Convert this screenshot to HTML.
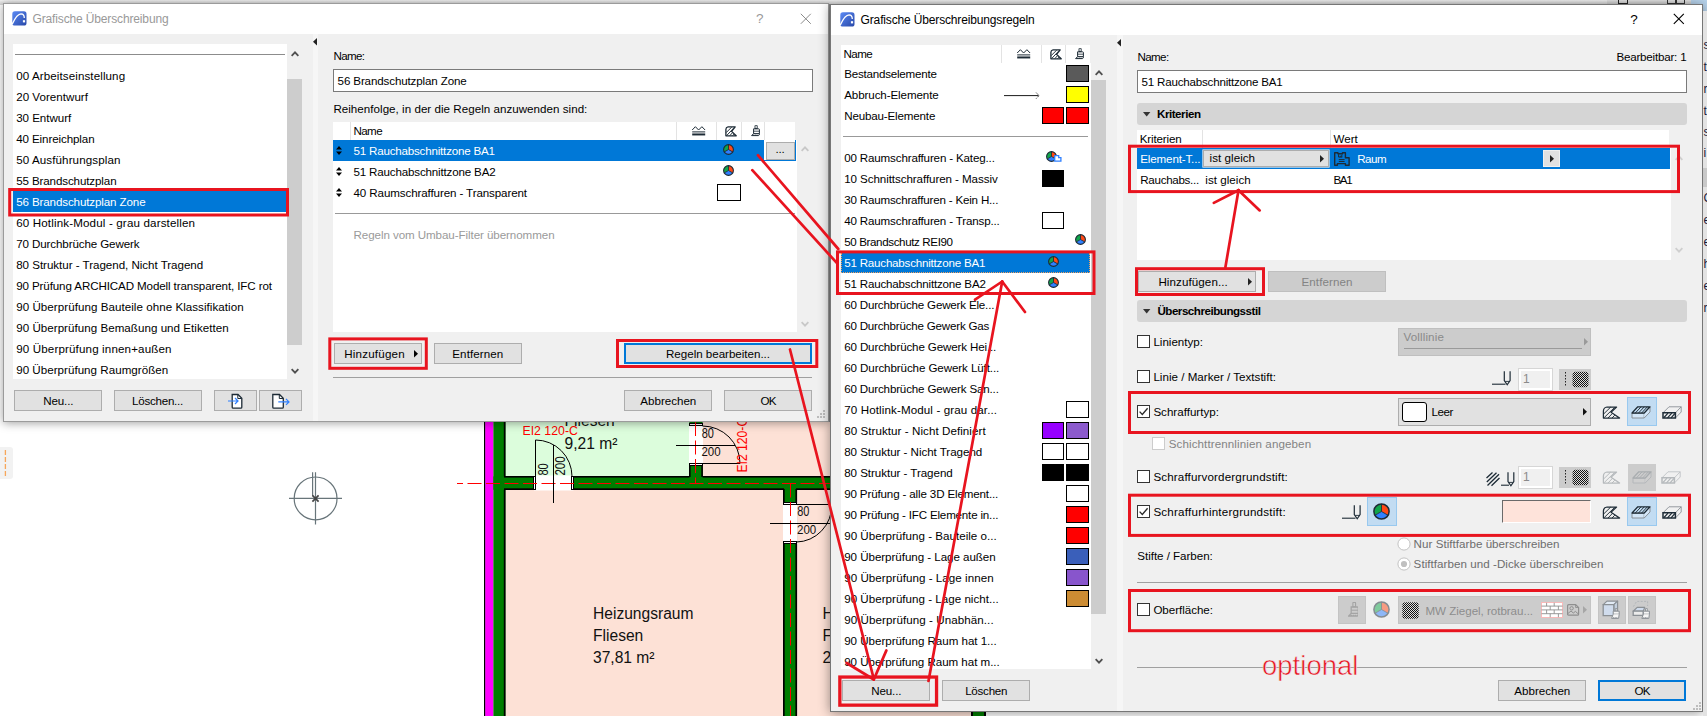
<!DOCTYPE html><html><head><meta charset="utf-8"><title>Grafische Überschreibung</title><style>html,body{margin:0;padding:0}body{width:1707px;height:716px;position:relative;overflow:hidden;background:#fff;font-family:"Liberation Sans", Arial, sans-serif;font-size:11.6px}.b{position:absolute;box-sizing:border-box;display:block}.t{position:absolute;white-space:nowrap;display:block}</style></head><body>
<div class="b" style="left:0.00px;top:0.00px;width:1707.00px;height:4.50px;background:linear-gradient(#f4f4f4,#d4d4d4)"></div>
<div class="b" style="left:1607.00px;top:0.00px;width:100.00px;height:4.50px;background:linear-gradient(#e6e6e6,#c8c8c8)"></div>
<div class="b" style="left:1617.50px;top:0.00px;width:10.50px;height:4.00px;border:1px solid #222;border-top:none"></div>
<div class="b" style="left:1667.00px;top:0.00px;width:9.00px;height:4.00px;border:1px solid #333;border-top:none"></div>
<div class="b" style="left:1676.00px;top:0.00px;width:9.00px;height:4.00px;border:1px solid #333;border-top:none"></div>
<div class="b" style="left:1691.00px;top:0.00px;width:16.00px;height:12.00px;background:#b9d5ee;"></div>
<svg class="b" style="left:0;top:0" width="1707" height="716" viewBox="0 0 1707 716" font-family='"Liberation Sans", Arial, sans-serif'><rect x="505" y="422" width="185" height="55" fill="#dcfddc"/><rect x="702" y="422" width="130" height="55" fill="#fde1d6"/><rect x="505" y="489" width="279" height="227" fill="#fde1d6"/><rect x="796" y="489" width="36" height="227" fill="#fde1d6"/><rect x="484" y="422" width="1.6" height="294" fill="#000"/><rect x="485.3" y="422" width="8.2" height="294" fill="#ff00ff"/><rect x="493.4" y="422" width="12" height="294" fill="#007d00"/><rect x="503.8" y="422" width="1.7" height="55" fill="#000"/><rect x="503.8" y="489" width="1.7" height="227" fill="#000"/><rect x="493.4" y="476.4" width="340" height="13.4" fill="#007d00"/><rect x="504" y="476" width="186" height="1.6" fill="#000"/><rect x="702" y="476" width="130" height="1.6" fill="#000"/><rect x="504" y="488.3" width="280" height="1.7" fill="#000"/><rect x="796" y="488.3" width="36" height="1.7" fill="#000"/><rect x="534" y="475.5" width="39.5" height="15" fill="#fff"/><g shape-rendering="crispEdges" stroke="#000" stroke-width="1" fill="#fff"><rect x="533.5" y="476.5" width="2" height="13"/><rect x="571.5" y="476.5" width="2" height="13"/></g><rect x="689.4" y="422" width="13.2" height="56" fill="#007d00"/><rect x="689" y="463" width="1.6" height="14" fill="#000"/><rect x="701.3" y="463" width="1.6" height="14" fill="#000"/><rect x="689" y="424" width="14" height="41" fill="#fff"/><g shape-rendering="crispEdges" stroke="#000" stroke-width="1" fill="#fff"><rect x="689.5" y="423.5" width="13" height="2"/><rect x="689.5" y="463.5" width="13" height="2"/></g><rect x="783.4" y="489" width="13.4" height="227" fill="#007d00"/><rect x="783" y="489" width="1.7" height="227" fill="#000"/><rect x="795.4" y="489" width="1.7" height="227" fill="#000"/><rect x="783" y="503" width="14.4" height="41" fill="#fff"/><g shape-rendering="crispEdges" stroke="#000" stroke-width="1" fill="#fff"><rect x="783.5" y="502.5" width="13" height="2"/><rect x="783.5" y="541.5" width="13" height="2"/></g><path d="M457 483.5H832" stroke="#f00" stroke-width="1" stroke-dasharray="14 4.5" stroke-dashoffset="8"/><path d="M695.5 422V484" stroke="#f00" stroke-width="1" stroke-dasharray="14 4.5"/><path d="M790.5 483.5V716" stroke="#f00" stroke-width="1" stroke-dasharray="14 4.5"/><g shape-rendering="crispEdges" stroke="#000" stroke-width="1" fill="none"><path d="M535.5 440V477M553.5 445V503M676 445.5H735M702 463.5H740M797 504.5H832M770 523.5H832"/></g><path d="M535.5 440A36.5 36.5 0 0 1 572 476.5" fill="none" stroke="#000" stroke-width="1"/><path d="M702.5 426A37.5 37.5 0 0 1 740 463.5" fill="none" stroke="#000" stroke-width="1"/><path d="M832 504.5A36 37.5 0 0 1 796.5 542" fill="none" stroke="#000" stroke-width="1"/><text x="564.5" y="426" font-size="15.6" fill="#111">Fliesen</text><text x="564.5" y="448.8" font-size="15.6" fill="#111">9,21 m²</text><text x="522.5" y="435.3" font-size="12.3" fill="#f00">EI2 120-C</text><text x="547.9" y="475.6" font-size="14" fill="#111" transform="rotate(-90 547.9 475.6)" textLength="12.4" lengthAdjust="spacingAndGlyphs">80</text><text x="564.9" y="475.6" font-size="14" fill="#111" transform="rotate(-90 564.9 475.6)" textLength="19.3" lengthAdjust="spacingAndGlyphs">200</text><text x="701.7" y="437.9" font-size="14" fill="#111" textLength="12.2" lengthAdjust="spacingAndGlyphs">80</text><text x="701.4" y="456.2" font-size="13.6" fill="#111" textLength="19.2" lengthAdjust="spacingAndGlyphs">200</text><text x="747.4" y="472.6" font-size="14" fill="#f00" transform="rotate(-90 747.4 472.6)" textLength="54.8" lengthAdjust="spacingAndGlyphs">EI2 120-C</text><text x="797.2" y="515.5" font-size="14" fill="#111" textLength="12.2" lengthAdjust="spacingAndGlyphs">80</text><text x="797" y="533.6" font-size="13.6" fill="#111" textLength="19.2" lengthAdjust="spacingAndGlyphs">200</text><text x="593" y="618.8" font-size="15.6" fill="#111">Heizungsraum</text><text x="593" y="640.8" font-size="15.6" fill="#111">Fliesen</text><text x="593" y="663.3" font-size="15.6" fill="#111">37,81 m²</text><text x="822.5" y="618.8" font-size="15.6" fill="#111">Heizungsraum</text><text x="822.5" y="640.8" font-size="15.6" fill="#111">Fliesen</text><text x="822.5" y="663.3" font-size="15.6" fill="#111">22,40 m²</text><g stroke="#68757a" stroke-width="1.2" fill="none"><circle cx="315.6" cy="498.4" r="21.4"/><path d="M289 498.4H342M315.5 472.3V524.6M312.6 472.3V496"/></g><path d="M312.4 495.4L318.6 501.6M318.6 495.4L312.4 501.6" stroke="#444" stroke-width="1.7"/></svg>
<div class="b" style="left:830.00px;top:700.00px;width:141.50px;height:16.00px;background:#fde1d6;"></div>
<div class="b" style="left:971.00px;top:700.00px;width:15.00px;height:16.00px;background:#000;"></div>
<div class="b" style="left:972.60px;top:700.00px;width:11.80px;height:16.00px;background:#007d00;"></div>
<div class="b" style="left:-4.00px;top:447.20px;width:16.80px;height:31.60px;background:#f2f2f2;border-radius:3px"></div>
<svg class="b" style="left:4.00px;top:449.90px;" width="3" height="27" viewBox="0 0 3 27"><path d="M1.4 0V26" stroke="#f7a65a" stroke-width="1.3" stroke-dasharray="4.9 2.1"/></svg>
<div class="b" style="left:2.50px;top:3.20px;width:826.20px;height:419.10px;background:#f0f0f0;border:1px solid #9b9b9b;box-shadow:0 1px 9px rgba(0,0,0,0.38)"></div>
<div class="b" style="left:3.50px;top:4.20px;width:824.20px;height:29.80px;background:#fff;"></div>
<svg class="b" style="left:11.80px;top:10.80px;" width="15" height="15" viewBox="0 0 15 15"><defs><linearGradient id="lg11" x1="0" y1="0" x2="1" y2="1"><stop offset="0" stop-color="#5b8af5"/><stop offset="1" stop-color="#2848a8"/></linearGradient></defs><rect x="0.3" y="0.3" width="14.2" height="14.2" rx="2.6" fill="url(#lg11)"/><path d="M0.2 13.2C3 7 5.5 3 9 2.8C11.5 2.8 12.3 5 12.3 7" fill="none" stroke="#fff" stroke-width="1.3"/><rect x="10.9" y="9.2" width="2.2" height="2.2" fill="#fff"/></svg>
<span id="t0" class="t" style="left:32.50px;top:10.64px;font-size:12px;line-height:17px;color:#999;letter-spacing:-0.142px;">Grafische Überschreibung</span>
<span id="t1" class="t" style="left:756.00px;top:9.42px;font-size:13.5px;line-height:19px;color:#999;letter-spacing:-0.162px;">?</span>
<svg class="b" style="left:799.50px;top:12.50px;" width="12" height="12" viewBox="0 0 12 12"><path d="M0.8 0.8L10.8 10.8M10.8 0.8L0.8 10.8" stroke="#8a8a8a" stroke-width="1"/></svg>
<div class="b" style="left:312.70px;top:34.00px;width:5.30px;height:387.30px;background:#f6f6f6;"></div>
<svg class="b" style="left:313.00px;top:37.80px;" width="5" height="8.4" viewBox="0 0 5 8.4"><path d="M4 0L0 3.7L4 7.4Z" fill="#222"/></svg>
<div class="b" style="left:13.00px;top:44.00px;width:274.00px;height:335.00px;background:#fff;"></div>
<div class="b" style="left:15.00px;top:53.60px;width:269.50px;height:1.20px;background:#8c8c8c;"></div>
<div class="b" style="left:287.00px;top:44.00px;width:15.00px;height:335.00px;background:#f0f0f0;"></div>
<div class="b" style="left:287.00px;top:79.00px;width:15.00px;height:265.50px;background:#cdcdcd;"></div>
<svg class="b" style="left:290.50px;top:50.50px;" width="8" height="6" viewBox="0 0 8 6"><path d="M0.6 4.9L4 1.4L7.4 4.9" fill="none" stroke="#505050" stroke-width="1.9"/></svg>
<svg class="b" style="left:290.50px;top:367.50px;" width="8" height="6" viewBox="0 0 8 6"><path d="M0.6 1.1L4 4.6L7.4 1.1" fill="none" stroke="#505050" stroke-width="1.9"/></svg>
<span id="t2" class="t" style="left:16.20px;top:67.98px;font-size:11.6px;line-height:16px;color:#000;letter-spacing:0.095px;">00 Arbeitseinstellung</span>
<span id="t3" class="t" style="left:16.20px;top:88.98px;font-size:11.6px;line-height:16px;color:#000;letter-spacing:0.019px;">20 Vorentwurf</span>
<span id="t4" class="t" style="left:16.20px;top:109.98px;font-size:11.6px;line-height:16px;color:#000;letter-spacing:-0.042px;">30 Entwurf</span>
<span id="t5" class="t" style="left:16.20px;top:130.98px;font-size:11.6px;line-height:16px;color:#000;letter-spacing:-0.109px;">40 Einreichplan</span>
<span id="t6" class="t" style="left:16.20px;top:151.98px;font-size:11.6px;line-height:16px;color:#000;letter-spacing:0.100px;">50 Ausführungsplan</span>
<span id="t7" class="t" style="left:16.20px;top:172.98px;font-size:11.6px;line-height:16px;color:#000;letter-spacing:-0.122px;">55 Brandschutzplan</span>
<div class="b" style="left:13.00px;top:191.00px;width:273.00px;height:21.00px;background:#0078d7;"></div>
<span id="t8" class="t" style="left:16.20px;top:193.98px;font-size:11.6px;line-height:16px;color:#fff;letter-spacing:-0.124px;">56 Brandschutzplan Zone</span>
<span id="t9" class="t" style="left:16.20px;top:214.98px;font-size:11.6px;line-height:16px;color:#000;letter-spacing:0.147px;">60 Hotlink-Modul - grau darstellen</span>
<span id="t10" class="t" style="left:16.20px;top:235.98px;font-size:11.6px;line-height:16px;color:#000;letter-spacing:-0.113px;">70 Durchbrüche Gewerk</span>
<span id="t11" class="t" style="left:16.20px;top:256.98px;font-size:11.6px;line-height:16px;color:#000;letter-spacing:-0.033px;">80 Struktur - Tragend, Nicht Tragend</span>
<span id="t12" class="t" style="left:16.20px;top:277.98px;font-size:11.6px;line-height:16px;color:#000;letter-spacing:-0.112px;">90 Prüfung ARCHICAD Modell transparent, IFC rot</span>
<span id="t13" class="t" style="left:16.20px;top:298.98px;font-size:11.6px;line-height:16px;color:#000;letter-spacing:0.044px;">90 Überprüfung Bauteile ohne Klassifikation</span>
<span id="t14" class="t" style="left:16.20px;top:319.98px;font-size:11.6px;line-height:16px;color:#000;letter-spacing:0.030px;">90 Überprüfung Bemaßung und Etiketten</span>
<span id="t15" class="t" style="left:16.20px;top:340.98px;font-size:11.6px;line-height:16px;color:#000;letter-spacing:0.142px;">90 Überprüfung innen+außen</span>
<span id="t16" class="t" style="left:16.20px;top:361.98px;font-size:11.6px;line-height:16px;color:#000;letter-spacing:0.022px;">90 Überprüfung Raumgrößen</span>
<div class="b" style="left:14.00px;top:390.30px;width:88.00px;height:20.70px;background:#e1e1e1;border:1px solid #adadad;"></div>
<span id="t17" class="t" style="left:43.30px;top:392.98px;font-size:11.6px;line-height:16px;color:#000;letter-spacing:-0.156px;">Neu...</span>
<div class="b" style="left:114.00px;top:390.30px;width:88.00px;height:20.70px;background:#e1e1e1;border:1px solid #adadad;"></div>
<span id="t18" class="t" style="left:132.00px;top:392.98px;font-size:11.6px;line-height:16px;color:#000;letter-spacing:-0.250px;">Löschen...</span>
<div class="b" style="left:214.00px;top:390.30px;width:43.00px;height:20.70px;background:#e1e1e1;border:1px solid #adadad;"></div>
<div class="b" style="left:259.00px;top:390.30px;width:43.00px;height:20.70px;background:#e1e1e1;border:1px solid #adadad;"></div>
<svg class="b" style="left:227.00px;top:392.50px;" width="18" height="17" viewBox="0 0 18 17"><path d="M5.2 1.5H11L14.8 5.3V14.2Q14.8 15.2 13.8 15.2H6.2Q5.2 15.2 5.2 14.2Z" fill="#fff" stroke="#1d2b36" stroke-width="1.3"/><path d="M10.8 1.8V5.5H14.5" fill="none" stroke="#1d2b36" stroke-width="1"/><path d="M1 8H11M8 5L11 8L8 11" fill="none" stroke="#2f80ff" stroke-width="1.2"/></svg>
<svg class="b" style="left:271.00px;top:392.50px;" width="20" height="17" viewBox="0 0 20 17"><path d="M1.8 1.5H8.5L12.3 5.3V14.2Q12.3 15.2 11.3 15.2H2.8Q1.8 15.2 1.8 14.2Z" fill="#fff" stroke="#1d2b36" stroke-width="1.3"/><path d="M8.3 1.8V5.5H12" fill="none" stroke="#1d2b36" stroke-width="1"/><path d="M7.3 8.9H18M15 5.9L18 8.9L15 11.9" fill="none" stroke="#2f80ff" stroke-width="1.2"/></svg>
<span id="t19" class="t" style="left:333.40px;top:47.98px;font-size:11.6px;line-height:16px;color:#000;letter-spacing:-0.631px;">Name:</span>
<div class="b" style="left:333.00px;top:69.00px;width:480.00px;height:23.00px;background:#fff;border:1px solid #7a7a7a;"></div>
<span id="t20" class="t" style="left:337.60px;top:72.98px;font-size:11.6px;line-height:16px;color:#000;letter-spacing:-0.136px;">56 Brandschutzplan Zone</span>
<span id="t21" class="t" style="left:333.40px;top:100.98px;font-size:11.6px;line-height:16px;color:#000;letter-spacing:0.028px;">Reihenfolge, in der die Regeln anzuwenden sind:</span>
<div class="b" style="left:333.00px;top:122.00px;width:464.00px;height:210.00px;background:#fff;"></div>
<div class="b" style="left:795.40px;top:122.00px;width:1.60px;height:18.00px;background:#f0f0f0;"></div>
<div class="b" style="left:349.80px;top:122.00px;width:1.10px;height:18.00px;background:#e3e3e3;"></div>
<div class="b" style="left:676.10px;top:122.00px;width:1.10px;height:18.00px;background:#e3e3e3;"></div>
<div class="b" style="left:715.90px;top:122.00px;width:1.10px;height:18.00px;background:#e3e3e3;"></div>
<div class="b" style="left:740.50px;top:122.00px;width:1.10px;height:18.00px;background:#e3e3e3;"></div>
<div class="b" style="left:763.90px;top:122.00px;width:1.10px;height:18.00px;background:#e3e3e3;"></div>
<span id="t22" class="t" style="left:353.50px;top:122.98px;font-size:11.6px;line-height:16px;color:#000;letter-spacing:-0.609px;">Name</span>
<svg class="b" style="left:692.20px;top:125.60px;" width="14" height="11" viewBox="0 0 14 11"><path d="M0.2 4L3.4 0.7L6.6 4L9.9 0.7L13.1 4" fill="none" stroke="#1d2b36" stroke-width="1"/><path d="M0.2 5.9H13.2" stroke="#1d2b36" stroke-width="1"/><path d="M0.2 8.45H13.2" stroke="#1d2b36" stroke-width="2"/></svg>
<svg class="b" style="left:725.00px;top:125.80px;" width="12" height="11" viewBox="0 0 12 11"><path d="M3 0.8H10.2L6.6 5.4L11.2 9.8H0.9V3.2Q1 1 3 0.8Z" fill="none" stroke="#1d2b36" stroke-width="1.3" stroke-linejoin="round"/><path d="M1.2 6.6L6.6 1.2M1.6 9.6L8.6 2.2M4.8 9.6L7.6 6.6M7.6 9.6L9.2 8" stroke="#1d2b36" stroke-width="0.95"/></svg>
<svg class="b" style="left:750.60px;top:125.00px;" width="10" height="12" viewBox="0 0 10 12"><path d="M4 0.7Q4 0.4 4.4 0.4H5.8Q6.2 0.4 6.2 0.7V3.6H4Z" fill="none" stroke="#1d2b36" stroke-width="0.9"/><path d="M2.6 3.8H7.6Q8.4 3.8 8.4 4.6V8.6H2.6Z" fill="none" stroke="#1d2b36" stroke-width="1"/><path d="M2.6 6.2H8.4" stroke="#1d2b36" stroke-width="0.8"/><path d="M2.6 8.6L0.6 10.6H7.6Q8.4 10.4 8.4 8.6" fill="none" stroke="#1d2b36" stroke-width="1"/><path d="M2.8 10.6v-1M4.4 10.6v-1M6 10.6v-1" stroke="#1d2b36" stroke-width="0.8"/></svg>
<div class="b" style="left:333.00px;top:140.00px;width:431.40px;height:21.00px;background:#0078d7;"></div>
<svg class="b" style="left:336.00px;top:146.00px;" width="6" height="9" viewBox="0 0 6 9"><path d="M0 3.5L3 0L6 3.5Z M0 5.5L3 9L6 5.5Z" fill="#000"/></svg>
<span id="t23" class="t" style="left:353.50px;top:142.98px;font-size:11.6px;line-height:16px;color:#fff;letter-spacing:-0.200px;">51 Rauchabschnittzone BA1</span>
<svg class="b" style="left:722.20px;top:143.20px;opacity:1.0" width="13" height="13" viewBox="-6.5 -6.5 13 13"><path d="M0 0L-4.24 2.45A4.9 4.9 0 0 1 -0.00 -4.90Z" fill="#10a54a"/><path d="M0 0L-0.00 -4.90A4.9 4.9 0 0 1 4.24 2.45Z" fill="#ff4815"/><path d="M0 0L4.24 2.45A4.9 4.9 0 0 1 -4.24 2.45Z" fill="#2f80ff"/><circle r="4.9" fill="none" stroke="#1d2b36" stroke-width="1.1"/><path d="M0 0L4.24 2.45" stroke="#1d2b36" stroke-width="0.9"/><path d="M0 0L-4.24 2.45" stroke="#1d2b36" stroke-width="0.9"/><path d="M0 0L-0.00 -4.90" stroke="#1d2b36" stroke-width="0.9"/></svg>
<div class="b" style="left:764.40px;top:140.00px;width:31.60px;height:21.00px;background:#fff;border-right:1px solid #0078d7;border-bottom:1px solid #0078d7"></div>
<div class="b" style="left:766.00px;top:141.50px;width:28.50px;height:18.00px;background:#e1e1e1;border:1px solid #adadad;"></div>
<span id="t24" class="t" style="left:775.50px;top:141.48px;font-size:11.6px;line-height:16px;color:#000;letter-spacing:-0.224px;">...</span>
<svg class="b" style="left:336.00px;top:167.00px;" width="6" height="9" viewBox="0 0 6 9"><path d="M0 3.5L3 0L6 3.5Z M0 5.5L3 9L6 5.5Z" fill="#000"/></svg>
<span id="t25" class="t" style="left:353.50px;top:163.98px;font-size:11.6px;line-height:16px;color:#000;letter-spacing:-0.173px;">51 Rauchabschnittzone BA2</span>
<svg class="b" style="left:722.20px;top:164.10px;opacity:1.0" width="13" height="13" viewBox="-6.5 -6.5 13 13"><path d="M0 0L-4.24 2.45A4.9 4.9 0 0 1 -0.00 -4.90Z" fill="#10a54a"/><path d="M0 0L-0.00 -4.90A4.9 4.9 0 0 1 4.24 2.45Z" fill="#ff4815"/><path d="M0 0L4.24 2.45A4.9 4.9 0 0 1 -4.24 2.45Z" fill="#2f80ff"/><circle r="4.9" fill="none" stroke="#1d2b36" stroke-width="1.1"/><path d="M0 0L4.24 2.45" stroke="#1d2b36" stroke-width="0.9"/><path d="M0 0L-4.24 2.45" stroke="#1d2b36" stroke-width="0.9"/><path d="M0 0L-0.00 -4.90" stroke="#1d2b36" stroke-width="0.9"/></svg>
<svg class="b" style="left:336.00px;top:188.00px;" width="6" height="9" viewBox="0 0 6 9"><path d="M0 3.5L3 0L6 3.5Z M0 5.5L3 9L6 5.5Z" fill="#000"/></svg>
<span id="t26" class="t" style="left:353.50px;top:184.98px;font-size:11.6px;line-height:16px;color:#000;letter-spacing:-0.110px;">40 Raumschraffuren - Transparent</span>
<div class="b" style="left:717.00px;top:184.00px;width:23.50px;height:17.30px;background:#fff;border:1px solid #000;"></div>
<div class="b" style="left:334.50px;top:212.60px;width:460.50px;height:1.20px;background:#999;"></div>
<span id="t27" class="t" style="left:353.50px;top:226.98px;font-size:11.6px;line-height:16px;color:#9a9a9a;letter-spacing:-0.077px;">Regeln vom Umbau-Filter übernommen</span>
<svg class="b" style="left:800.60px;top:146.40px;" width="8" height="6" viewBox="0 0 8 6"><path d="M0.6 4.9L4 1.4L7.4 4.9" fill="none" stroke="#c8c8c8" stroke-width="1.9"/></svg>
<svg class="b" style="left:800.60px;top:321.00px;" width="8" height="6" viewBox="0 0 8 6"><path d="M0.6 1.1L4 4.6L7.4 1.1" fill="none" stroke="#c8c8c8" stroke-width="1.9"/></svg>
<div class="b" style="left:334.00px;top:343.30px;width:88.00px;height:20.70px;background:#e1e1e1;border:1px solid #adadad;"></div>
<span id="t28" class="t" style="left:344.30px;top:345.98px;font-size:11.6px;line-height:16px;color:#000;letter-spacing:0.184px;">Hinzufügen</span>
<svg class="b" style="left:414.00px;top:349.90px;" width="5" height="8.4" viewBox="0 0 5 8.4"><path d="M0 0L4 3.7L0 7.4Z" fill="#000"/></svg>
<div class="b" style="left:434.00px;top:343.30px;width:88.00px;height:20.70px;background:#e1e1e1;border:1px solid #adadad;"></div>
<span id="t29" class="t" style="left:452.30px;top:345.98px;font-size:11.6px;line-height:16px;color:#000;letter-spacing:0.080px;">Entfernen</span>
<div class="b" style="left:624.00px;top:343.30px;width:188.00px;height:20.70px;background:#e1e1e1;border:2px solid #0078d7;"></div>
<span id="t30" class="t" style="left:666.00px;top:345.98px;font-size:11.6px;line-height:16px;color:#000;letter-spacing:-0.021px;">Regeln bearbeiten...</span>
<div class="b" style="left:333.00px;top:376.80px;width:479.00px;height:1.20px;background:#a0a0a0;"></div>
<div class="b" style="left:624.00px;top:390.30px;width:88.00px;height:20.70px;background:#e1e1e1;border:1px solid #adadad;"></div>
<span id="t31" class="t" style="left:640.30px;top:392.98px;font-size:11.6px;line-height:16px;color:#000;letter-spacing:-0.009px;">Abbrechen</span>
<div class="b" style="left:724.00px;top:390.30px;width:88.00px;height:20.70px;background:#e1e1e1;border:1px solid #adadad;"></div>
<span id="t32" class="t" style="left:760.50px;top:392.98px;font-size:11.6px;line-height:16px;color:#000;letter-spacing:-0.883px;">OK</span>
<svg class="b" style="left:817.00px;top:410.00px;" width="9" height="9" viewBox="0 0 9 9"><g fill="#bdbdbd"><rect x="6" y="0" width="2" height="2"/><rect x="3" y="3" width="2" height="2"/><rect x="6" y="3" width="2" height="2"/><rect x="0" y="6" width="2" height="2"/><rect x="3" y="6" width="2" height="2"/><rect x="6" y="6" width="2" height="2"/></g></svg>
<div class="b" style="left:829.00px;top:4.00px;width:2.00px;height:418.00px;background:#808080;"></div>
<div class="b" style="left:830.00px;top:4.00px;width:873.00px;height:708.00px;background:#f0f0f0;border:1px solid #767676;box-shadow:0 1px 11px rgba(0,0,0,0.42)"></div>
<div class="b" style="left:831.00px;top:5.00px;width:871.00px;height:30.00px;background:#fff;"></div>
<svg class="b" style="left:839.80px;top:11.80px;" width="15" height="15" viewBox="0 0 15 15"><defs><linearGradient id="lg839" x1="0" y1="0" x2="1" y2="1"><stop offset="0" stop-color="#5b8af5"/><stop offset="1" stop-color="#2848a8"/></linearGradient></defs><rect x="0.3" y="0.3" width="14.2" height="14.2" rx="2.6" fill="url(#lg839)"/><path d="M0.2 13.2C3 7 5.5 3 9 2.8C11.5 2.8 12.3 5 12.3 7" fill="none" stroke="#fff" stroke-width="1.3"/><rect x="10.9" y="9.2" width="2.2" height="2.2" fill="#fff"/></svg>
<span id="t33" class="t" style="left:860.60px;top:12.04px;font-size:12px;line-height:17px;color:#000;letter-spacing:-0.153px;">Grafische Überschreibungsregeln</span>
<span id="t34" class="t" style="left:1630.30px;top:9.92px;font-size:13.5px;line-height:19px;color:#000;letter-spacing:-0.162px;">?</span>
<svg class="b" style="left:1673.20px;top:13.20px;" width="12" height="12" viewBox="0 0 12 12"><path d="M0.8 0.8L10.8 10.8M10.8 0.8L0.8 10.8" stroke="#000" stroke-width="1.1"/></svg>
<div class="b" style="left:1117.00px;top:35.00px;width:6.00px;height:676.00px;background:#f6f6f6;"></div>
<svg class="b" style="left:1117.00px;top:38.80px;" width="5" height="8.4" viewBox="0 0 5 8.4"><path d="M4 0L0 3.7L4 7.4Z" fill="#222"/></svg>
<div class="b" style="left:841.00px;top:45.00px;width:250.00px;height:624.00px;background:#fff;"></div>
<div class="b" style="left:1089.50px;top:45.00px;width:1.50px;height:18.00px;background:#f0f0f0;"></div>
<div class="b" style="left:1001.10px;top:45.00px;width:1.10px;height:18.00px;background:#e3e3e3;"></div>
<div class="b" style="left:1041.10px;top:45.00px;width:1.10px;height:18.00px;background:#e3e3e3;"></div>
<div class="b" style="left:1065.00px;top:45.00px;width:1.10px;height:18.00px;background:#e3e3e3;"></div>
<span id="t35" class="t" style="left:843.60px;top:45.98px;font-size:11.6px;line-height:16px;color:#000;letter-spacing:-0.609px;">Name</span>
<svg class="b" style="left:1016.90px;top:48.60px;" width="14" height="11" viewBox="0 0 14 11"><path d="M0.2 4L3.4 0.7L6.6 4L9.9 0.7L13.1 4" fill="none" stroke="#1d2b36" stroke-width="1"/><path d="M0.2 5.9H13.2" stroke="#1d2b36" stroke-width="1"/><path d="M0.2 8.45H13.2" stroke="#1d2b36" stroke-width="2"/></svg>
<svg class="b" style="left:1049.80px;top:48.80px;" width="12" height="11" viewBox="0 0 12 11"><path d="M3 0.8H10.2L6.6 5.4L11.2 9.8H0.9V3.2Q1 1 3 0.8Z" fill="none" stroke="#1d2b36" stroke-width="1.3" stroke-linejoin="round"/><path d="M1.2 6.6L6.6 1.2M1.6 9.6L8.6 2.2M4.8 9.6L7.6 6.6M7.6 9.6L9.2 8" stroke="#1d2b36" stroke-width="0.95"/></svg>
<svg class="b" style="left:1074.80px;top:48.00px;" width="10" height="12" viewBox="0 0 10 12"><path d="M4 0.7Q4 0.4 4.4 0.4H5.8Q6.2 0.4 6.2 0.7V3.6H4Z" fill="none" stroke="#1d2b36" stroke-width="0.9"/><path d="M2.6 3.8H7.6Q8.4 3.8 8.4 4.6V8.6H2.6Z" fill="none" stroke="#1d2b36" stroke-width="1"/><path d="M2.6 6.2H8.4" stroke="#1d2b36" stroke-width="0.8"/><path d="M2.6 8.6L0.6 10.6H7.6Q8.4 10.4 8.4 8.6" fill="none" stroke="#1d2b36" stroke-width="1"/><path d="M2.8 10.6v-1M4.4 10.6v-1M6 10.6v-1" stroke="#1d2b36" stroke-width="0.8"/></svg>
<div class="b" style="left:1091.00px;top:63.00px;width:15.00px;height:606.00px;background:#f0f0f0;"></div>
<div class="b" style="left:1091.00px;top:80.00px;width:15.00px;height:534.00px;background:#cdcdcd;"></div>
<svg class="b" style="left:1094.50px;top:69.70px;" width="8" height="6" viewBox="0 0 8 6"><path d="M0.6 4.9L4 1.4L7.4 4.9" fill="none" stroke="#505050" stroke-width="1.9"/></svg>
<svg class="b" style="left:1094.50px;top:657.70px;" width="8" height="6" viewBox="0 0 8 6"><path d="M0.6 1.1L4 4.6L7.4 1.1" fill="none" stroke="#505050" stroke-width="1.9"/></svg>
<span id="t36" class="t" style="left:844.20px;top:65.98px;font-size:11.6px;line-height:16px;color:#000;letter-spacing:-0.221px;">Bestandselemente</span>
<div class="b" style="left:1066.00px;top:65.30px;width:23.20px;height:17.00px;background:#5a5a5a;border:1px solid #000;"></div>
<span id="t37" class="t" style="left:844.20px;top:86.98px;font-size:11.6px;line-height:16px;color:#000;letter-spacing:-0.096px;">Abbruch-Elemente</span>
<div class="b" style="left:1066.00px;top:86.30px;width:23.20px;height:17.00px;background:#ffff00;border:1px solid #000;"></div>
<svg class="b" style="left:1004.00px;top:91.00px;" width="37" height="9" viewBox="0 0 37 9"><path d="M0 4.6H34.5" stroke="#000" stroke-width="0.9"/><path d="M32.2 1.6L35 4.6L32.2 7.6" fill="none" stroke="#000" stroke-width="0.8" stroke-dasharray="1.4 1"/></svg>
<span id="t38" class="t" style="left:844.20px;top:107.98px;font-size:11.6px;line-height:16px;color:#000;letter-spacing:-0.164px;">Neubau-Elemente</span>
<div class="b" style="left:1042.00px;top:107.30px;width:22.40px;height:17.00px;background:#ff0000;border:1px solid #000;"></div>
<div class="b" style="left:1066.00px;top:107.30px;width:23.20px;height:17.00px;background:#ff0000;border:1px solid #000;"></div>
<div class="b" style="left:843.00px;top:136.00px;width:245.00px;height:1.20px;background:#999;"></div>
<span id="t39" class="t" style="left:844.20px;top:149.98px;font-size:11.6px;line-height:16px;color:#000;letter-spacing:-0.158px;">00 Raumschraffuren - Kateg...</span>
<svg class="b" style="left:1045.00px;top:150.00px;opacity:1.0" width="13" height="13" viewBox="-6.5 -6.5 13 13"><path d="M0 0L-4.24 2.45A4.9 4.9 0 0 1 -0.00 -4.90Z" fill="#10a54a"/><path d="M0 0L-0.00 -4.90A4.9 4.9 0 0 1 4.24 2.45Z" fill="#ff4815"/><path d="M0 0L4.24 2.45A4.9 4.9 0 0 1 -4.24 2.45Z" fill="#2f80ff"/><circle r="4.9" fill="none" stroke="#1d2b36" stroke-width="1.1"/><path d="M0 0L4.24 2.45" stroke="#1d2b36" stroke-width="0.9"/><path d="M0 0L-4.24 2.45" stroke="#1d2b36" stroke-width="0.9"/><path d="M0 0L-0.00 -4.90" stroke="#1d2b36" stroke-width="0.9"/></svg>
<svg class="b" style="left:1053.50px;top:155.30px;" width="8" height="7" viewBox="0 0 8 7"><path d="M0.7 0.7H4.7V2.6H6.9V6.1H0.7Z" fill="#fff" stroke="#2f80ff" stroke-width="1.3"/></svg>
<span id="t40" class="t" style="left:844.20px;top:170.98px;font-size:11.6px;line-height:16px;color:#000;letter-spacing:-0.075px;">10 Schnittschraffuren - Massiv</span>
<div class="b" style="left:1042.00px;top:170.30px;width:22.40px;height:17.00px;background:#000;border:1px solid #000;"></div>
<span id="t41" class="t" style="left:844.20px;top:191.98px;font-size:11.6px;line-height:16px;color:#000;letter-spacing:-0.187px;">30 Raumschraffuren - Kein H...</span>
<span id="t42" class="t" style="left:844.20px;top:212.98px;font-size:11.6px;line-height:16px;color:#000;letter-spacing:-0.159px;">40 Raumschraffuren - Transp...</span>
<div class="b" style="left:1042.00px;top:212.30px;width:22.40px;height:17.00px;background:#fff;border:1px solid #000;"></div>
<span id="t43" class="t" style="left:844.20px;top:233.98px;font-size:11.6px;line-height:16px;color:#000;letter-spacing:-0.376px;">50 Brandschutz REI90</span>
<svg class="b" style="left:1074.10px;top:232.90px;opacity:1.0" width="13" height="13" viewBox="-6.5 -6.5 13 13"><path d="M0 0L-4.24 2.45A4.9 4.9 0 0 1 -0.00 -4.90Z" fill="#10a54a"/><path d="M0 0L-0.00 -4.90A4.9 4.9 0 0 1 4.24 2.45Z" fill="#ff4815"/><path d="M0 0L4.24 2.45A4.9 4.9 0 0 1 -4.24 2.45Z" fill="#2f80ff"/><circle r="4.9" fill="none" stroke="#1d2b36" stroke-width="1.1"/><path d="M0 0L4.24 2.45" stroke="#1d2b36" stroke-width="0.9"/><path d="M0 0L-4.24 2.45" stroke="#1d2b36" stroke-width="0.9"/><path d="M0 0L-0.00 -4.90" stroke="#1d2b36" stroke-width="0.9"/></svg>
<div class="b" style="left:841.00px;top:253.00px;width:249.30px;height:20.00px;background:#0078d7;border-right:1px dotted #f0a060;border-bottom:1px dotted #f0a060;border-left:1px dotted #f0a060"></div>
<span id="t44" class="t" style="left:844.20px;top:254.98px;font-size:11.6px;line-height:16px;color:#fff;letter-spacing:-0.213px;">51 Rauchabschnittzone BA1</span>
<svg class="b" style="left:1047.00px;top:255.00px;opacity:1.0" width="13" height="13" viewBox="-6.5 -6.5 13 13"><path d="M0 0L-4.24 2.45A4.9 4.9 0 0 1 -0.00 -4.90Z" fill="#10a54a"/><path d="M0 0L-0.00 -4.90A4.9 4.9 0 0 1 4.24 2.45Z" fill="#ff4815"/><path d="M0 0L4.24 2.45A4.9 4.9 0 0 1 -4.24 2.45Z" fill="#2f80ff"/><circle r="4.9" fill="none" stroke="#1d2b36" stroke-width="1.1"/><path d="M0 0L4.24 2.45" stroke="#1d2b36" stroke-width="0.9"/><path d="M0 0L-4.24 2.45" stroke="#1d2b36" stroke-width="0.9"/><path d="M0 0L-0.00 -4.90" stroke="#1d2b36" stroke-width="0.9"/></svg>
<span id="t45" class="t" style="left:844.20px;top:275.98px;font-size:11.6px;line-height:16px;color:#000;letter-spacing:-0.192px;">51 Rauchabschnittzone BA2</span>
<svg class="b" style="left:1047.00px;top:276.00px;opacity:1.0" width="13" height="13" viewBox="-6.5 -6.5 13 13"><path d="M0 0L-4.24 2.45A4.9 4.9 0 0 1 -0.00 -4.90Z" fill="#10a54a"/><path d="M0 0L-0.00 -4.90A4.9 4.9 0 0 1 4.24 2.45Z" fill="#ff4815"/><path d="M0 0L4.24 2.45A4.9 4.9 0 0 1 -4.24 2.45Z" fill="#2f80ff"/><circle r="4.9" fill="none" stroke="#1d2b36" stroke-width="1.1"/><path d="M0 0L4.24 2.45" stroke="#1d2b36" stroke-width="0.9"/><path d="M0 0L-4.24 2.45" stroke="#1d2b36" stroke-width="0.9"/><path d="M0 0L-0.00 -4.90" stroke="#1d2b36" stroke-width="0.9"/></svg>
<span id="t46" class="t" style="left:844.20px;top:296.98px;font-size:11.6px;line-height:16px;color:#000;letter-spacing:-0.189px;">60 Durchbrüche Gewerk Ele...</span>
<span id="t47" class="t" style="left:844.20px;top:317.98px;font-size:11.6px;line-height:16px;color:#000;letter-spacing:-0.206px;">60 Durchbrüche Gewerk Gas</span>
<span id="t48" class="t" style="left:844.20px;top:338.98px;font-size:11.6px;line-height:16px;color:#000;letter-spacing:-0.141px;">60 Durchbrüche Gewerk Hei...</span>
<span id="t49" class="t" style="left:844.20px;top:359.98px;font-size:11.6px;line-height:16px;color:#000;letter-spacing:-0.099px;">60 Durchbrüche Gewerk Lüft...</span>
<span id="t50" class="t" style="left:844.20px;top:380.98px;font-size:11.6px;line-height:16px;color:#000;letter-spacing:-0.167px;">60 Durchbrüche Gewerk San...</span>
<span id="t51" class="t" style="left:844.20px;top:401.98px;font-size:11.6px;line-height:16px;color:#000;letter-spacing:0.117px;">70 Hotlink-Modul - grau dar...</span>
<div class="b" style="left:1066.00px;top:401.30px;width:23.20px;height:17.00px;background:#fff;border:1px solid #000;"></div>
<span id="t52" class="t" style="left:844.20px;top:422.98px;font-size:11.6px;line-height:16px;color:#000;letter-spacing:0.058px;">80 Struktur - Nicht Definiert</span>
<div class="b" style="left:1042.00px;top:422.30px;width:22.40px;height:17.00px;background:#9700ff;border:1px solid #000;"></div>
<div class="b" style="left:1066.00px;top:422.30px;width:23.20px;height:17.00px;background:#8c5acd;border:1px solid #000;"></div>
<span id="t53" class="t" style="left:844.20px;top:443.98px;font-size:11.6px;line-height:16px;color:#000;letter-spacing:-0.044px;">80 Struktur - Nicht Tragend</span>
<div class="b" style="left:1042.00px;top:443.30px;width:22.40px;height:17.00px;background:#fff;border:1px solid #000;"></div>
<div class="b" style="left:1066.00px;top:443.30px;width:23.20px;height:17.00px;background:#fff;border:1px solid #000;"></div>
<span id="t54" class="t" style="left:844.20px;top:464.98px;font-size:11.6px;line-height:16px;color:#000;letter-spacing:-0.050px;">80 Struktur - Tragend</span>
<div class="b" style="left:1042.00px;top:464.30px;width:22.40px;height:17.00px;background:#000;border:1px solid #000;"></div>
<div class="b" style="left:1066.00px;top:464.30px;width:23.20px;height:17.00px;background:#000;border:1px solid #000;"></div>
<span id="t55" class="t" style="left:844.20px;top:485.98px;font-size:11.6px;line-height:16px;color:#000;letter-spacing:-0.147px;">90 Prüfung - alle 3D Element...</span>
<div class="b" style="left:1066.00px;top:485.30px;width:23.20px;height:17.00px;background:#fff;border:1px solid #000;"></div>
<span id="t56" class="t" style="left:844.20px;top:506.98px;font-size:11.6px;line-height:16px;color:#000;letter-spacing:-0.187px;">90 Prüfung - IFC Elemente in...</span>
<div class="b" style="left:1066.00px;top:506.30px;width:23.20px;height:17.00px;background:#ff0000;border:1px solid #000;"></div>
<span id="t57" class="t" style="left:844.20px;top:527.98px;font-size:11.6px;line-height:16px;color:#000;letter-spacing:0.013px;">90 Überprüfung - Bauteile o...</span>
<div class="b" style="left:1066.00px;top:527.30px;width:23.20px;height:17.00px;background:#ff0000;border:1px solid #000;"></div>
<span id="t58" class="t" style="left:844.20px;top:548.98px;font-size:11.6px;line-height:16px;color:#000;letter-spacing:-0.047px;">90 Überprüfung - Lage außen</span>
<div class="b" style="left:1066.00px;top:548.30px;width:23.20px;height:17.00px;background:#3a5fba;border:1px solid #000;"></div>
<span id="t59" class="t" style="left:844.20px;top:569.98px;font-size:11.6px;line-height:16px;color:#000;letter-spacing:0.046px;">90 Überprüfung - Lage innen</span>
<div class="b" style="left:1066.00px;top:569.30px;width:23.20px;height:17.00px;background:#8855cc;border:1px solid #000;"></div>
<span id="t60" class="t" style="left:844.20px;top:590.98px;font-size:11.6px;line-height:16px;color:#000;letter-spacing:0.015px;">90 Überprüfung - Lage nicht...</span>
<div class="b" style="left:1066.00px;top:590.30px;width:23.20px;height:17.00px;background:#cc8c33;border:1px solid #000;"></div>
<span id="t61" class="t" style="left:844.20px;top:611.98px;font-size:11.6px;line-height:16px;color:#000;letter-spacing:0.071px;">90 Überprüfung - Unabhän...</span>
<span id="t62" class="t" style="left:844.20px;top:632.98px;font-size:11.6px;line-height:16px;color:#000;letter-spacing:-0.032px;">90 Überprüfung Raum hat 1...</span>
<span id="t63" class="t" style="left:844.20px;top:653.98px;font-size:11.6px;line-height:16px;color:#000;letter-spacing:-0.039px;">90 Überprüfung Raum hat m...</span>
<div class="b" style="left:842.00px;top:680.30px;width:88.00px;height:20.70px;background:#e1e1e1;border:1px solid #adadad;"></div>
<span id="t64" class="t" style="left:871.30px;top:682.98px;font-size:11.6px;line-height:16px;color:#000;letter-spacing:-0.156px;">Neu...</span>
<div class="b" style="left:942.00px;top:680.30px;width:88.00px;height:20.70px;background:#e1e1e1;border:1px solid #adadad;"></div>
<span id="t65" class="t" style="left:965.20px;top:682.98px;font-size:11.6px;line-height:16px;color:#000;letter-spacing:-0.263px;">Löschen</span>
<span id="t66" class="t" style="left:1137.50px;top:48.98px;font-size:11.6px;line-height:16px;color:#000;letter-spacing:-0.631px;">Name:</span>
<span id="t67" class="t" style="right:20.60px;top:48.98px;font-size:11.6px;line-height:16px;color:#000;letter-spacing:-0.203px;">Bearbeitbar: 1</span>
<div class="b" style="left:1137.00px;top:70.00px;width:550.00px;height:23.00px;background:#fff;border:1px solid #7a7a7a;"></div>
<span id="t68" class="t" style="left:1141.60px;top:73.98px;font-size:11.6px;line-height:16px;color:#000;letter-spacing:-0.213px;">51 Rauchabschnittzone BA1</span>
<div class="b" style="left:1137.00px;top:103.00px;width:550.00px;height:22.00px;background:#d5d5d5;border-radius:3px"></div>
<svg class="b" style="left:1142.70px;top:112.00px;" width="8.4" height="5.4" viewBox="0 0 8.4 5.4"><path d="M0 0H7.4L3.7 4.4Z" fill="#333"/></svg>
<span id="t69" class="t" style="left:1157.00px;top:105.98px;font-size:11.6px;line-height:16px;color:#000;font-weight:700;letter-spacing:-0.465px;">Kriterien</span>
<div class="b" style="left:1137.00px;top:130.00px;width:534.40px;height:130.00px;background:#fff;"></div>
<div class="b" style="left:1669.30px;top:130.00px;width:2.10px;height:18.00px;background:#f0f0f0;"></div>
<div class="b" style="left:1201.80px;top:130.00px;width:1.10px;height:18.00px;background:#e3e3e3;"></div>
<div class="b" style="left:1330.00px;top:130.00px;width:1.10px;height:18.00px;background:#e3e3e3;"></div>
<span id="t70" class="t" style="left:1139.70px;top:130.58px;font-size:11.6px;line-height:16px;color:#000;letter-spacing:-0.132px;">Kriterien</span>
<span id="t71" class="t" style="left:1333.40px;top:130.58px;font-size:11.6px;line-height:16px;color:#000;letter-spacing:0.059px;">Wert</span>
<div class="b" style="left:1137.00px;top:148.00px;width:533.00px;height:21.20px;background:#0078d7;"></div>
<span id="t72" class="t" style="left:1140.30px;top:150.98px;font-size:11.6px;line-height:16px;color:#fff;letter-spacing:-0.155px;">Element-T...</span>
<div class="b" style="left:1202.60px;top:149.80px;width:126.40px;height:17.20px;background:#e1e1e1;border:1px solid #adadad;box-shadow:0 0 0 0.6px #f4f4f4"></div>
<span id="t73" class="t" style="left:1209.60px;top:150.28px;font-size:11.6px;line-height:16px;color:#000;letter-spacing:0.039px;">ist gleich</span>
<svg class="b" style="left:1320.00px;top:154.80px;" width="5" height="8.4" viewBox="0 0 5 8.4"><path d="M0 0L4 3.7L0 7.4Z" fill="#222"/></svg>
<svg class="b" style="left:1334.00px;top:152.00px;" width="17" height="15" viewBox="0 0 17 15"><path d="M0.7 0.7H3.9V1.8H8.5V0.7H11.4V5.7H15.1V13.2H11.4V11.6H3.4V13.2H0.7Z" fill="none" stroke="#1d2b36" stroke-width="1.4" stroke-linejoin="round"/><path d="M4.6 2.2V5.1H8.3M4.8 7.6H10.6M4.8 9.5H10.6" fill="none" stroke="#1d2b36" stroke-width="1"/><path d="M8.4 2.1V5.1H5.2Z" fill="#1d2b36" opacity="0.75"/></svg>
<span id="t74" class="t" style="left:1357.20px;top:150.98px;font-size:11.6px;line-height:16px;color:#fff;letter-spacing:-0.484px;">Raum</span>
<div class="b" style="left:1543.00px;top:150.00px;width:17.00px;height:17.00px;background:#e1e1e1;border:1px solid #f0f0f0;"></div>
<svg class="b" style="left:1549.60px;top:154.80px;" width="5" height="8.4" viewBox="0 0 5 8.4"><path d="M0 0L4 3.7L0 7.4Z" fill="#222"/></svg>
<span id="t75" class="t" style="left:1140.30px;top:172.28px;font-size:11.6px;line-height:16px;color:#000;letter-spacing:-0.307px;">Rauchabs...</span>
<span id="t76" class="t" style="left:1205.30px;top:172.28px;font-size:11.6px;line-height:16px;color:#000;letter-spacing:0.039px;">ist gleich</span>
<span id="t77" class="t" style="left:1333.40px;top:172.28px;font-size:11.6px;line-height:16px;color:#000;letter-spacing:-1.307px;">BA1</span>
<svg class="b" style="left:1674.50px;top:155.00px;" width="8" height="6" viewBox="0 0 8 6"><path d="M0.6 4.9L4 1.4L7.4 4.9" fill="none" stroke="#cfcfcf" stroke-width="1.9"/></svg>
<svg class="b" style="left:1674.50px;top:247.00px;" width="8" height="6" viewBox="0 0 8 6"><path d="M0.6 1.1L4 4.6L7.4 1.1" fill="none" stroke="#cfcfcf" stroke-width="1.9"/></svg>
<div class="b" style="left:1138.00px;top:271.30px;width:118.00px;height:20.70px;background:#e1e1e1;border:1px solid #adadad;"></div>
<span id="t78" class="t" style="left:1158.40px;top:273.98px;font-size:11.6px;line-height:16px;color:#000;letter-spacing:0.090px;">Hinzufügen...</span>
<svg class="b" style="left:1248.00px;top:277.90px;" width="5" height="8.4" viewBox="0 0 5 8.4"><path d="M0 0L4 3.7L0 7.4Z" fill="#222"/></svg>
<div class="b" style="left:1268.00px;top:271.30px;width:118.00px;height:20.70px;background:#cccccc;border:1px solid #bfbfbf;"></div>
<span id="t79" class="t" style="left:1301.50px;top:273.98px;font-size:11.6px;line-height:16px;color:#838383;letter-spacing:0.080px;">Entfernen</span>
<div class="b" style="left:1137.00px;top:300.30px;width:550.00px;height:21.70px;background:#d5d5d5;border-radius:3px"></div>
<svg class="b" style="left:1142.80px;top:309.30px;" width="8.4" height="5.4" viewBox="0 0 8.4 5.4"><path d="M0 0H7.4L3.7 4.4Z" fill="#333"/></svg>
<span id="t80" class="t" style="left:1157.40px;top:302.98px;font-size:11.6px;line-height:16px;color:#000;font-weight:700;letter-spacing:-0.479px;">Überschreibungsstil</span>
<div class="b" style="left:1137.00px;top:335.00px;width:13.00px;height:13.00px;background:#fff;border:1px solid #333;"></div>
<span id="t81" class="t" style="left:1153.40px;top:333.98px;font-size:11.6px;line-height:16px;color:#000;letter-spacing:-0.014px;">Linientyp:</span>
<div class="b" style="left:1398.00px;top:328.00px;width:193.00px;height:28.00px;background:#cccccc;border:1px solid #bfbfbf;"></div>
<span id="t82" class="t" style="left:1403.50px;top:328.98px;font-size:11.6px;line-height:16px;color:#8a8a8a;letter-spacing:0.130px;">Volllinie</span>
<div class="b" style="left:1403.50px;top:348.00px;width:178.50px;height:1.10px;background:#9a9a9a;"></div>
<svg class="b" style="left:1584.00px;top:337.60px;" width="5" height="8.4" viewBox="0 0 5 8.4"><path d="M0 0L4 3.7L0 7.4Z" fill="#9a9a9a"/></svg>
<div class="b" style="left:1137.00px;top:370.00px;width:13.00px;height:13.00px;background:#fff;border:1px solid #333;"></div>
<span id="t83" class="t" style="left:1153.40px;top:368.98px;font-size:11.6px;line-height:16px;color:#000;letter-spacing:0.011px;">Linie / Marker / Textstift:</span>
<svg class="b" style="left:1492.00px;top:371.00px;" width="20" height="15" viewBox="0 0 20 15"><path d="M0 13.2H13.5" stroke="#1d2b36" stroke-width="1.1"/><path d="M12.3 0.3V9.6L15.2 13.8L18.1 9.6V0.3" fill="none" stroke="#1d2b36" stroke-width="1.2"/><path d="M13.2 10.4H17.2" stroke="#1d2b36" stroke-width="0.9"/></svg>
<div class="b" style="left:1519.00px;top:369.20px;width:33.00px;height:20.40px;background:#f0f0f0;border:2px solid #fff;box-shadow:0 0 0 1px #d6d6d6"></div>
<span id="t84" class="t" style="left:1523.00px;top:371.34px;font-size:12px;line-height:17px;color:#8a8a8a;letter-spacing:-0.144px;">1</span>
<div class="b" style="left:1559.00px;top:369.00px;width:32.00px;height:21.00px;background:#cccccc;"></div>
<svg class="b" style="left:1559.00px;top:369.00px;" width="32" height="21" viewBox="0 0 32 21"><defs><pattern id="ck369" width="2" height="2" patternUnits="userSpaceOnUse"><rect width="1" height="1" fill="#111"/><rect x="1" y="1" width="1" height="1" fill="#111"/></pattern></defs><path d="M6.5 3V18" stroke="#222" stroke-width="1" stroke-dasharray="1.5 1.5"/><rect x="13.5" y="2.8" width="16" height="15.4" rx="3" fill="#dcdcdc"/><rect x="13.5" y="2.8" width="16" height="15.4" rx="3" fill="url(#ck369)"/></svg>
<div class="b" style="left:1137.00px;top:405.00px;width:13.00px;height:13.00px;background:#fff;border:1px solid #333;"></div>
<svg class="b" style="left:1137.00px;top:405.00px;" width="13" height="13" viewBox="0 0 13 13"><path d="M2.6 6.6L5.3 9.4L10.6 3.2" fill="none" stroke="#2a2a2a" stroke-width="1.35"/></svg>
<span id="t85" class="t" style="left:1153.40px;top:403.98px;font-size:11.6px;line-height:16px;color:#000;letter-spacing:-0.002px;">Schraffurtyp:</span>
<div class="b" style="left:1398.00px;top:398.00px;width:193.00px;height:28.00px;background:#e1e1e1;border:1px solid #adadad;"></div>
<div class="b" style="left:1402.00px;top:402.00px;width:25.30px;height:20.00px;background:#fff;border:1px solid #000;border-radius:3px"></div>
<span id="t86" class="t" style="left:1431.40px;top:403.78px;font-size:11.6px;line-height:16px;color:#000;letter-spacing:-0.430px;">Leer</span>
<svg class="b" style="left:1583.20px;top:408.30px;" width="5" height="8.4" viewBox="0 0 5 8.4"><path d="M0 0L4 3.7L0 7.4Z" fill="#111"/></svg>
<svg class="b" style="left:1602.20px;top:405.50px;" width="19" height="13" viewBox="0 0 19 13"><path d="M5 1H14.6L9 6.2L17.6 12H1.4V5Q1.6 1.4 5 1Z" fill="none" stroke="#1d2b36" stroke-width="1.25" stroke-linejoin="round"/><path d="M1.6 8L8.6 1.2M2.2 11.6L12.6 1.4M6 12L10.4 7.4M10 12L12.8 9.2" stroke="#1d2b36" stroke-width="0.95"/></svg>
<div class="b" style="left:1627.00px;top:397.00px;width:30.30px;height:29.00px;background:#c2dcf2;border:1px solid #99c9ef;"></div>
<svg class="b" style="left:1631.40px;top:405.80px;" width="20" height="13" viewBox="0 0 20 13"><path d="M1 7H13.2V12H1Z" fill="#d3e6f7" stroke="#8a9096" stroke-width="1"/><path d="M13.2 7L19 0.8V6L13.2 12" fill="#d3e6f7" stroke="#8a9096" stroke-width="1"/><path d="M1 7L6.8 0.8H19L13.2 7Z" fill="none" stroke="#1d2b36" stroke-width="1.25" stroke-linejoin="round"/><path d="M4.3 7L10.1 0.8M7.5 7L13.3 0.8M10.6 7L16.4 0.8" stroke="#1d2b36" stroke-width="0.95"/></svg>
<svg class="b" style="left:1661.60px;top:405.70px;" width="20" height="13" viewBox="0 0 20 13"><path d="M1 6.8L7 0.8H19.2L13.4 6.8M19.2 0.8V6L13.4 12" fill="none" stroke="#8a9096" stroke-width="0.9"/><path d="M1 6.8H13.4V12H1Z" fill="none" stroke="#1d2b36" stroke-width="1.5"/><path d="M2 11.5L6 7.2M5.5 11.8L9.8 7.2M9 11.8L13 7.5" stroke="#1d2b36" stroke-width="1.2"/></svg>
<div class="b" style="left:1152.00px;top:437.00px;width:13.00px;height:13.00px;background:#fff;border:1px solid #cccccc;"></div>
<span id="t87" class="t" style="left:1168.70px;top:435.98px;font-size:11.6px;line-height:16px;color:#838383;letter-spacing:0.101px;">Schichttrennlinien angeben</span>
<div class="b" style="left:1137.00px;top:470.00px;width:13.00px;height:13.00px;background:#fff;border:1px solid #333;"></div>
<span id="t88" class="t" style="left:1153.40px;top:468.98px;font-size:11.6px;line-height:16px;color:#000;letter-spacing:0.150px;">Schraffurvordergrundstift:</span>
<svg class="b" style="left:1486.00px;top:472.00px;" width="16" height="15" viewBox="0 0 16 15"><path d="M0.5 6L6.5 0.5M0.8 10L10.5 0.8M1.5 13.5L13 2.2M5.5 13.8L13.5 6" stroke="#1d2b36" stroke-width="1.3"/></svg>
<svg class="b" style="left:1501.00px;top:472.30px;" width="15" height="15" viewBox="0 0 15 15"><path d="M0 13.2H8" stroke="#1d2b36" stroke-width="1.1"/><path d="M7 0.3V9.6L9.9 13.8L12.8 9.6V0.3" fill="none" stroke="#1d2b36" stroke-width="1.2"/><path d="M7.9 10.4H11.9" stroke="#1d2b36" stroke-width="0.9"/></svg>
<div class="b" style="left:1519.00px;top:467.20px;width:32.50px;height:20.40px;background:#f0f0f0;border:2px solid #fff;box-shadow:0 0 0 1px #d6d6d6"></div>
<span id="t89" class="t" style="left:1523.00px;top:469.34px;font-size:12px;line-height:17px;color:#8a8a8a;letter-spacing:-0.144px;">1</span>
<div class="b" style="left:1559.00px;top:467.00px;width:32.00px;height:21.00px;background:#cccccc;"></div>
<svg class="b" style="left:1559.00px;top:467.00px;" width="32" height="21" viewBox="0 0 32 21"><defs><pattern id="ck467" width="2" height="2" patternUnits="userSpaceOnUse"><rect width="1" height="1" fill="#111"/><rect x="1" y="1" width="1" height="1" fill="#111"/></pattern></defs><path d="M6.5 3V18" stroke="#222" stroke-width="1" stroke-dasharray="1.5 1.5"/><rect x="13.5" y="2.8" width="16" height="15.4" rx="3" fill="#dcdcdc"/><rect x="13.5" y="2.8" width="16" height="15.4" rx="3" fill="url(#ck467)"/></svg>
<svg class="b" style="left:1602.20px;top:471.00px;" width="19" height="13" viewBox="0 0 19 13"><path d="M5 1H14.6L9 6.2L17.6 12H1.4V5Q1.6 1.4 5 1Z" fill="none" stroke="#b5b9bc" stroke-width="1.25" stroke-linejoin="round"/><path d="M1.6 8L8.6 1.2M2.2 11.6L12.6 1.4M6 12L10.4 7.4M10 12L12.8 9.2" stroke="#b5b9bc" stroke-width="0.95"/></svg>
<div class="b" style="left:1628.00px;top:463.50px;width:28.00px;height:27.00px;background:#cccccc;"></div>
<svg class="b" style="left:1631.50px;top:471.00px;" width="20" height="13" viewBox="0 0 20 13"><path d="M1 7H13.2V12H1Z" fill="#cfcfcf" stroke="#b4b7ba" stroke-width="1"/><path d="M13.2 7L19 0.8V6L13.2 12" fill="#cfcfcf" stroke="#b4b7ba" stroke-width="1"/><path d="M1 7L6.8 0.8H19L13.2 7Z" fill="none" stroke="#a9adb0" stroke-width="1.25" stroke-linejoin="round"/><path d="M4.3 7L10.1 0.8M7.5 7L13.3 0.8M10.6 7L16.4 0.8" stroke="#a9adb0" stroke-width="0.95"/></svg>
<svg class="b" style="left:1661.30px;top:471.00px;" width="20" height="13" viewBox="0 0 20 13"><path d="M1 6.8L7 0.8H19.2L13.4 6.8M19.2 0.8V6L13.4 12" fill="none" stroke="#c0c3c6" stroke-width="0.9"/><path d="M1 6.8H13.4V12H1Z" fill="none" stroke="#b5b9bc" stroke-width="1.5"/><path d="M2 11.5L6 7.2M5.5 11.8L9.8 7.2M9 11.8L13 7.5" stroke="#b5b9bc" stroke-width="1.2"/></svg>
<div class="b" style="left:1137.00px;top:505.00px;width:13.00px;height:13.00px;background:#fff;border:1px solid #333;"></div>
<svg class="b" style="left:1137.00px;top:505.00px;" width="13" height="13" viewBox="0 0 13 13"><path d="M2.6 6.6L5.3 9.4L10.6 3.2" fill="none" stroke="#2a2a2a" stroke-width="1.35"/></svg>
<span id="t90" class="t" style="left:1153.40px;top:503.98px;font-size:11.6px;line-height:16px;color:#000;letter-spacing:0.221px;">Schraffurhintergrundstift:</span>
<svg class="b" style="left:1342.20px;top:504.90px;" width="20" height="15" viewBox="0 0 20 15"><path d="M0 13.2H13.5" stroke="#1d2b36" stroke-width="1.1"/><path d="M12.3 0.3V9.6L15.2 13.8L18.1 9.6V0.3" fill="none" stroke="#1d2b36" stroke-width="1.2"/><path d="M13.2 10.4H17.2" stroke="#1d2b36" stroke-width="0.9"/></svg>
<div class="b" style="left:1367.00px;top:497.30px;width:30.00px;height:28.70px;background:#c2dcf2;border:1px solid #99c9ef;"></div>
<svg class="b" style="left:1371.90px;top:501.90px;opacity:1.0" width="19" height="19" viewBox="-9.5 -9.5 19 19"><path d="M0 0L-6.58 3.80A7.6 7.6 0 0 1 -0.00 -7.60Z" fill="#10a54a"/><path d="M0 0L-0.00 -7.60A7.6 7.6 0 0 1 6.58 3.80Z" fill="#ff4815"/><path d="M0 0L6.58 3.80A7.6 7.6 0 0 1 -6.58 3.80Z" fill="#2f80ff"/><circle r="7.6" fill="none" stroke="#1d2b36" stroke-width="1.5"/><path d="M0 0L6.58 3.80" stroke="#1d2b36" stroke-width="0.9"/><path d="M0 0L-6.58 3.80" stroke="#1d2b36" stroke-width="0.9"/><path d="M0 0L-0.00 -7.60" stroke="#1d2b36" stroke-width="0.9"/></svg>
<div class="b" style="left:1502.30px;top:500.30px;width:89.10px;height:23.00px;background:#fee3da;border-top:1.5px solid #6a6a6a;border-left:1.5px solid #6a6a6a;border-bottom:1.5px solid #fff;border-right:1.5px solid #fff"></div>
<svg class="b" style="left:1602.20px;top:505.50px;" width="19" height="13" viewBox="0 0 19 13"><path d="M5 1H14.6L9 6.2L17.6 12H1.4V5Q1.6 1.4 5 1Z" fill="none" stroke="#1d2b36" stroke-width="1.25" stroke-linejoin="round"/><path d="M1.6 8L8.6 1.2M2.2 11.6L12.6 1.4M6 12L10.4 7.4M10 12L12.8 9.2" stroke="#1d2b36" stroke-width="0.95"/></svg>
<div class="b" style="left:1627.00px;top:497.30px;width:30.30px;height:28.70px;background:#c2dcf2;border:1px solid #99c9ef;"></div>
<svg class="b" style="left:1631.40px;top:505.80px;" width="20" height="13" viewBox="0 0 20 13"><path d="M1 7H13.2V12H1Z" fill="#d3e6f7" stroke="#8a9096" stroke-width="1"/><path d="M13.2 7L19 0.8V6L13.2 12" fill="#d3e6f7" stroke="#8a9096" stroke-width="1"/><path d="M1 7L6.8 0.8H19L13.2 7Z" fill="none" stroke="#1d2b36" stroke-width="1.25" stroke-linejoin="round"/><path d="M4.3 7L10.1 0.8M7.5 7L13.3 0.8M10.6 7L16.4 0.8" stroke="#1d2b36" stroke-width="0.95"/></svg>
<svg class="b" style="left:1661.60px;top:505.70px;" width="20" height="13" viewBox="0 0 20 13"><path d="M1 6.8L7 0.8H19.2L13.4 6.8M19.2 0.8V6L13.4 12" fill="none" stroke="#8a9096" stroke-width="0.9"/><path d="M1 6.8H13.4V12H1Z" fill="none" stroke="#1d2b36" stroke-width="1.5"/><path d="M2 11.5L6 7.2M5.5 11.8L9.8 7.2M9 11.8L13 7.5" stroke="#1d2b36" stroke-width="1.2"/></svg>
<span id="t91" class="t" style="left:1137.30px;top:547.98px;font-size:11.6px;line-height:16px;color:#000;letter-spacing:-0.034px;">Stifte / Farben:</span>
<svg class="b" style="left:1396.60px;top:536.60px;" width="14" height="14" viewBox="0 0 14 14"><circle cx="7" cy="7" r="6.1" fill="#fff" stroke="#c2c2c2" stroke-width="1"/></svg>
<span id="t92" class="t" style="left:1413.60px;top:535.98px;font-size:11.6px;line-height:16px;color:#6d6d6d;letter-spacing:0.035px;">Nur Stiftfarbe überschreiben</span>
<svg class="b" style="left:1396.60px;top:556.60px;" width="14" height="14" viewBox="0 0 14 14"><circle cx="7" cy="7" r="6.1" fill="#fff" stroke="#c2c2c2" stroke-width="1"/><circle cx="7" cy="7" r="3.1" fill="#c0c0c0"/></svg>
<span id="t93" class="t" style="left:1413.60px;top:555.98px;font-size:11.6px;line-height:16px;color:#6d6d6d;letter-spacing:0.050px;">Stiftfarben und -Dicke überschreiben</span>
<div class="b" style="left:1137.00px;top:582.00px;width:550.00px;height:1.20px;background:#a0a0a0;"></div>
<div class="b" style="left:1137.00px;top:603.00px;width:13.00px;height:13.00px;background:#fff;border:1px solid #333;"></div>
<span id="t94" class="t" style="left:1153.40px;top:601.98px;font-size:11.6px;line-height:16px;color:#000;letter-spacing:-0.040px;">Oberfläche:</span>
<div class="b" style="left:1338.00px;top:596.00px;width:28.00px;height:28.00px;background:#cccccc;border:1px solid #c4c4c4;"></div>
<svg class="b" style="left:1347.5px;top:601.5px" width="10.5" height="15.6" viewBox="0 0 8.6 11.8" preserveAspectRatio="none"><path d="M4 0.7Q4 0.4 4.4 0.4H5.8Q6.2 0.4 6.2 0.7V3.6H4Z" fill="none" stroke="#a4a4a4" stroke-width="0.9"/><path d="M2.6 3.8H7.6Q8.4 3.8 8.4 4.6V8.6H2.6Z" fill="none" stroke="#a4a4a4" stroke-width="1"/><path d="M2.6 6.2H8.4" stroke="#a4a4a4" stroke-width="0.8"/><path d="M2.6 8.6L0.6 10.6H7.6Q8.4 10.4 8.4 8.6" fill="none" stroke="#a4a4a4" stroke-width="1"/><path d="M2.8 10.6v-1M4.4 10.6v-1M6 10.6v-1" stroke="#a4a4a4" stroke-width="0.8"/></svg>
<svg class="b" style="left:1371.90px;top:600.10px;opacity:0.5" width="19" height="19" viewBox="-9.5 -9.5 19 19"><path d="M0 0L-6.58 3.80A7.6 7.6 0 0 1 -0.00 -7.60Z" fill="#10a54a"/><path d="M0 0L-0.00 -7.60A7.6 7.6 0 0 1 6.58 3.80Z" fill="#ff4815"/><path d="M0 0L6.58 3.80A7.6 7.6 0 0 1 -6.58 3.80Z" fill="#2f80ff"/><circle r="7.6" fill="none" stroke="#1d2b36" stroke-width="1.5"/><path d="M0 0L6.58 3.80" stroke="#1d2b36" stroke-width="0.9"/><path d="M0 0L-6.58 3.80" stroke="#1d2b36" stroke-width="0.9"/><path d="M0 0L-0.00 -7.60" stroke="#1d2b36" stroke-width="0.9"/></svg>
<div class="b" style="left:1398.00px;top:596.00px;width:193.00px;height:28.00px;background:#cccccc;border:1px solid #c4c4c4;"></div>
<svg class="b" style="left:1402.00px;top:602.00px;" width="17" height="17" viewBox="0 0 17 17"><defs><pattern id="ckm" width="2" height="2" patternUnits="userSpaceOnUse"><rect width="1" height="1" fill="#111"/><rect x="1" y="1" width="1" height="1" fill="#111"/></pattern></defs><rect x="0.3" y="0.3" width="16.4" height="16.4" rx="3" fill="#ddd"/><rect x="0.3" y="0.3" width="16.4" height="16.4" rx="3" fill="url(#ckm)"/></svg>
<span id="t95" class="t" style="left:1425.50px;top:602.78px;font-size:11.6px;line-height:16px;color:#8d8d8d;letter-spacing:-0.035px;">MW Ziegel, rotbrau...</span>
<svg class="b" style="left:1541.00px;top:602.00px;" width="22" height="16" viewBox="0 0 22 16"><rect x="0.5" y="0.5" width="21" height="15" fill="#fff" stroke="#f9b9b9" stroke-width="1"/><path d="M0.5 4.1H21.5M0.5 7.9H21.5M0.5 11.7H21.5M5.6 0.8V4.1M13.2 0.8V4.1M9.2 4.1V7.9M17.4 4.1V7.9M5.6 7.9V11.7M13.2 7.9V11.7M9.2 11.7V15.2M17.4 11.7V15.2" stroke="#8e8e8e" stroke-width="0.9"/></svg>
<svg class="b" style="left:1567.00px;top:604.00px;" width="13" height="12" viewBox="0 0 13 12"><path d="M1.6 0.7H8.6L11.6 3.4V10.2Q11.6 11.2 10.6 11.2H1.6Q0.6 11.2 0.6 10.2V1.7Q0.6 0.7 1.6 0.7Z" fill="none" stroke="#8f8f8f" stroke-width="1.2"/><circle cx="4.6" cy="4.3" r="1.7" fill="none" stroke="#8f8f8f" stroke-width="1"/><path d="M0.8 9.6L4 7L6.3 9L8.4 7.4L11.4 10" fill="none" stroke="#8f8f8f" stroke-width="1"/><path d="M8.6 0.9V3.5H11.4" fill="none" stroke="#8f8f8f" stroke-width="0.9"/></svg>
<svg class="b" style="left:1583.20px;top:605.90px;" width="5" height="8.4" viewBox="0 0 5 8.4"><path d="M0 0L4 3.7L0 7.4Z" fill="#a6a6a6"/></svg>
<div class="b" style="left:1598.00px;top:596.00px;width:28.00px;height:28.00px;background:#cccccc;border:1px solid #c4c4c4;"></div>
<div class="b" style="left:1628.30px;top:596.00px;width:28.00px;height:28.00px;background:#cccccc;border:1px solid #c4c4c4;"></div>
<svg class="b" style="left:1602.00px;top:600.00px;" width="20" height="20" viewBox="0 0 20 20"><path d="M1.2 4.6L5 1.1H15.6L11.8 4.6Z" fill="#e2ebf5" stroke="#8b9095" stroke-width="1.2" stroke-linejoin="round"/><path d="M11.8 4.6L15.6 1.1V12L11.8 15.6Z" fill="#c3cfde" stroke="#8b9095" stroke-width="1.2" stroke-linejoin="round"/><path d="M1.2 4.6H11.8V15.6H1.2Z" fill="#d0dced" stroke="#8b9095" stroke-width="1.3"/><path d="M13.299999999999999 8.6h1.8v2.6h-1.8z" fill="#f6f6f6" stroke="#8b9095" stroke-width="0.9"/><path d="M11.2 11.2h6v3h-6z" fill="#f6f6f6" stroke="#8b9095" stroke-width="1"/><path d="M11.2 14.2L9.6 18.4H16.6L17.2 14.2" fill="#f6f6f6" stroke="#8b9095" stroke-width="1"/><path d="M11.6 18.4v-1.4M13.2 18.4v-1.4M14.799999999999999 18.4v-1.4" stroke="#8b9095" stroke-width="0.8"/></svg>
<svg class="b" style="left:1632.00px;top:600.00px;" width="20" height="20" viewBox="0 0 20 20"><path d="M1.4 6.6L4.6 1.4H15.6V6" fill="none" stroke="#b0b4b8" stroke-width="0.9" stroke-dasharray="2 1.4"/><path d="M1.2 11.2L5.2 7.4H12.7L11.2 11.2Z" fill="#d0dced" stroke="#8b9095" stroke-width="1.2" stroke-linejoin="round"/><path d="M1.2 11.2H11.2V15.3H1.2Z" fill="#ececec" stroke="#8b9095" stroke-width="1.3"/><path d="M13.5 8.6h1.8v2.6h-1.8z" fill="#f6f6f6" stroke="#8b9095" stroke-width="0.9"/><path d="M11.4 11.2h6v3h-6z" fill="#f6f6f6" stroke="#8b9095" stroke-width="1"/><path d="M11.4 14.2L9.8 18.4H16.8L17.4 14.2" fill="#f6f6f6" stroke="#8b9095" stroke-width="1"/><path d="M11.8 18.4v-1.4M13.4 18.4v-1.4M15.0 18.4v-1.4" stroke="#8b9095" stroke-width="0.8"/></svg>
<div class="b" style="left:1137.00px;top:666.80px;width:549.50px;height:1.20px;background:#a0a0a0;"></div>
<span id="t96" class="t" style="left:1262.00px;top:646.71px;font-size:27.4px;line-height:38px;color:#e8141f;letter-spacing:0.068px;-webkit-text-stroke:0.55px #f0f0f0;">optional</span>
<div class="b" style="left:1498.00px;top:680.30px;width:88.00px;height:20.70px;background:#e1e1e1;border:1px solid #adadad;"></div>
<span id="t97" class="t" style="left:1514.30px;top:682.98px;font-size:11.6px;line-height:16px;color:#000;letter-spacing:-0.009px;">Abbrechen</span>
<div class="b" style="left:1598.00px;top:680.30px;width:88.00px;height:20.70px;background:#e1e1e1;border:2px solid #0078d7;"></div>
<span id="t98" class="t" style="left:1634.50px;top:682.98px;font-size:11.6px;line-height:16px;color:#000;letter-spacing:-0.883px;">OK</span>
<svg class="b" style="left:1692.50px;top:702.00px;" width="9" height="9" viewBox="0 0 9 9"><g fill="#bdbdbd"><rect x="6" y="0" width="2" height="2"/><rect x="3" y="3" width="2" height="2"/><rect x="6" y="3" width="2" height="2"/><rect x="0" y="6" width="2" height="2"/><rect x="3" y="6" width="2" height="2"/><rect x="6" y="6" width="2" height="2"/></g></svg>
<div class="b" style="left:1703.20px;top:11.00px;width:3.80px;height:705.00px;background:#e3e3e3;"></div>
<div class="b" style="left:1703.20px;top:168.00px;width:3.80px;height:19.00px;background:#c9c9c9;"></div>
<div class="b" style="left:1703.4px;top:36.5px;width:3.6px;height:16px;overflow:hidden;font-size:12px;line-height:16px;color:#1a1a3a;white-space:nowrap">s</div>
<div class="b" style="left:1703.4px;top:59.0px;width:3.6px;height:16px;overflow:hidden;font-size:12px;line-height:16px;color:#1a1a3a;white-space:nowrap">tv</div>
<div class="b" style="left:1703.4px;top:81.0px;width:3.6px;height:16px;overflow:hidden;font-size:12px;line-height:16px;color:#1a1a3a;white-space:nowrap">r</div>
<div class="b" style="left:1703.4px;top:103.0px;width:3.6px;height:16px;overflow:hidden;font-size:12px;line-height:16px;color:#1a1a3a;white-space:nowrap">th</div>
<div class="b" style="left:1703.4px;top:124.0px;width:3.6px;height:16px;overflow:hidden;font-size:12px;line-height:16px;color:#1a1a3a;white-space:nowrap">s</div>
<div class="b" style="left:1703.4px;top:145.0px;width:3.6px;height:16px;overflow:hidden;font-size:12px;line-height:16px;color:#1a1a3a;white-space:nowrap">i</div>
<div class="b" style="left:1703.4px;top:189.5px;width:3.6px;height:16px;overflow:hidden;font-size:12px;line-height:16px;color:#1a1a3a;white-space:nowrap">G</div>
<div class="b" style="left:1703.4px;top:211.7px;width:3.6px;height:16px;overflow:hidden;font-size:12px;line-height:16px;color:#1a1a3a;white-space:nowrap">e</div>
<div class="b" style="left:1703.4px;top:233.5px;width:3.6px;height:16px;overflow:hidden;font-size:12px;line-height:16px;color:#1a1a3a;white-space:nowrap">e</div>
<div class="b" style="left:1703.4px;top:255.7px;width:3.6px;height:16px;overflow:hidden;font-size:12px;line-height:16px;color:#1a1a3a;white-space:nowrap">h</div>
<div class="b" style="left:1703.4px;top:278.0px;width:3.6px;height:16px;overflow:hidden;font-size:12px;line-height:16px;color:#1a1a3a;white-space:nowrap">e</div>
<div class="b" style="left:1703.4px;top:299.7px;width:3.6px;height:16px;overflow:hidden;font-size:12px;line-height:16px;color:#1a1a3a;white-space:nowrap">r</div>
<svg class="b" style="left:0;top:0" width="1707" height="716" viewBox="0 0 1707 716"><rect x="9.70" y="189.50" width="277.80" height="25.50" fill="none" stroke="#e8141f" stroke-width="3"/><rect x="329.80" y="338.90" width="96.50" height="29.40" fill="none" stroke="#e8141f" stroke-width="3"/><rect x="617.50" y="340.50" width="199.30" height="26.00" fill="none" stroke="#e8141f" stroke-width="3"/><rect x="837.50" y="251.90" width="256.50" height="41.60" fill="none" stroke="#e8141f" stroke-width="3"/><rect x="839.85" y="677.05" width="96.70" height="28.10" fill="none" stroke="#e8141f" stroke-width="3.3"/><rect x="1129.50" y="146.20" width="549.00" height="45.40" fill="none" stroke="#e8141f" stroke-width="3"/><rect x="1136.50" y="268.70" width="127.00" height="25.80" fill="none" stroke="#e8141f" stroke-width="3"/><rect x="1129.50" y="392.50" width="560.00" height="40.00" fill="none" stroke="#e8141f" stroke-width="3"/><rect x="1129.50" y="495.20" width="560.00" height="40.20" fill="none" stroke="#e8141f" stroke-width="3"/><rect x="1129.50" y="590.50" width="560.00" height="40.20" fill="none" stroke="#e8141f" stroke-width="3"/><path d="M757.9 155.2L838.3 249" stroke="#e8141f" stroke-width="2.7" stroke-linecap="round" fill="none"/><path d="M752.3 170.2L837.2 263.4" stroke="#e8141f" stroke-width="2.7" stroke-linecap="round" fill="none"/><path d="M790 349.5L873.8 679" stroke="#e8141f" stroke-width="2.7" stroke-linecap="round" fill="none"/><path d="M873.8 679.5L846.6 663" stroke="#e8141f" stroke-width="2.7" stroke-linecap="round" fill="none"/><path d="M873.8 679.5L886.4 650.4" stroke="#e8141f" stroke-width="2.7" stroke-linecap="round" fill="none"/><path d="M1002.2 281.5L928.5 681" stroke="#e8141f" stroke-width="2.7" stroke-linecap="round" fill="none"/><path d="M1002.2 281.5L975 299.7" stroke="#e8141f" stroke-width="2.7" stroke-linecap="round" fill="none"/><path d="M1002.2 281.5L1025 312" stroke="#e8141f" stroke-width="2.7" stroke-linecap="round" fill="none"/><path d="M1238.5 190.2L1225.4 267.2" stroke="#e8141f" stroke-width="2.7" stroke-linecap="round" fill="none"/><path d="M1238.5 190.2L1213.8 202.9" stroke="#e8141f" stroke-width="2.7" stroke-linecap="round" fill="none"/><path d="M1238.5 190.2L1259.7 210.4" stroke="#e8141f" stroke-width="2.7" stroke-linecap="round" fill="none"/></svg>
</body></html>
